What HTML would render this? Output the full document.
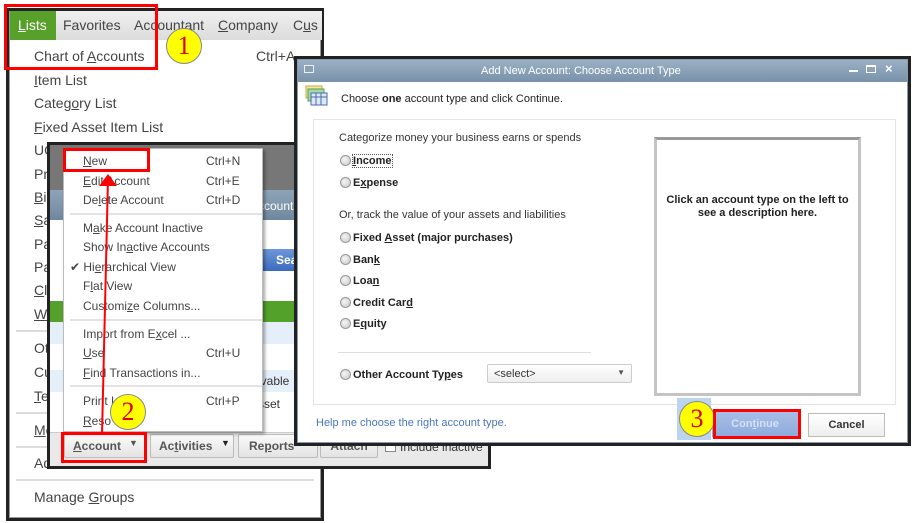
<!DOCTYPE html>
<html><head><meta charset="utf-8"><style>
*{margin:0;padding:0;box-sizing:border-box}
body{width:912px;height:523px;background:#fff;position:relative;overflow:hidden;font-family:"Liberation Sans",sans-serif;color:#333}
.a{position:absolute}
.mi{position:absolute;left:34px;font-size:14px;color:#444;white-space:nowrap}
.sep{position:absolute;left:16px;width:298px;height:2px;background:#ddd}
.am{position:absolute;left:19px;font-size:12px;color:#444;white-space:nowrap}
.sc{position:absolute;left:142px;font-size:12px;color:#444}
.asep{position:absolute;left:6px;width:192px;height:2px;background:#e3e3e3}
.rad{position:absolute;left:340px;width:11px;height:11px;border-radius:50%;background:radial-gradient(circle at 40% 40%,#f4f4f4,#c8c8c8);border:1px solid #999}
.rl{position:absolute;left:353px;font-size:11px;font-weight:bold;color:#222;white-space:nowrap}
.circ{position:absolute;width:36px;height:36px;border-radius:50%;background:#ffff00;border:1px solid #888;color:#d00;font-family:"Liberation Serif",serif;font-size:26px;text-align:center;line-height:34px}
.rb{position:absolute;border:3px solid #f00}
.btn{position:absolute;height:24px;border:1px solid #bbb;border-radius:2px;background:linear-gradient(#fafafa,#e4e4e4);font-size:12px;font-weight:bold;color:#555;padding:4px 0 0 0;text-align:center}
u{text-decoration:underline}
</style></head><body>

<!-- Lists menu window -->
<div class="a" style="left:6px;top:8px;width:318px;height:513px;border:3px solid #222;background:#fff"></div>
<div class="a" style="left:9px;top:11px;width:312px;height:507px;border:1px solid #999;background:#fff"></div>
<div class="a" style="left:10px;top:11px;width:312px;height:29px;background:linear-gradient(#f0f0f0,#dcdcdc)"></div>
<div class="a" style="left:10px;top:11px;width:46px;height:29px;background:#57a02a"></div>
<div class="a" style="left:18px;top:17px;font-size:14px;color:#fff"><u>L</u>ists</div>
<div class="a" style="left:63px;top:17px;font-size:14px;color:#444">Favorites</div>
<div class="a" style="left:134px;top:17px;font-size:14px;color:#444">Accountant</div>
<div class="a" style="left:218px;top:17px;font-size:14px;color:#444"><u>C</u>ompany</div>
<div class="a" style="left:293px;top:17px;font-size:14px;color:#444">C<u>u</u>s</div>

<div class="mi" style="top:48px">Chart of <u>A</u>ccounts</div>
<div class="a" style="left:256px;top:48px;font-size:14px;color:#444">Ctrl+A</div>
<div class="mi" style="top:72px"><u>I</u>tem List</div>
<div class="mi" style="top:95px">Categ<u>o</u>ry List</div>
<div class="mi" style="top:119px"><u>F</u>ixed Asset Item List</div>
<div class="mi" style="top:142px">UOM</div>
<div class="mi" style="top:166px">Price</div>
<div class="mi" style="top:189px"><u>B</u>ill</div>
<div class="mi" style="top:212px"><u>S</u>ales</div>
<div class="mi" style="top:236px">Payroll</div>
<div class="mi" style="top:259px">Payment</div>
<div class="mi" style="top:282px"><u>C</u>lass</div>
<div class="mi" style="top:306px"><u>W</u>ork</div>
<div class="sep" style="top:330px"></div>
<div class="mi" style="top:340px">Other</div>
<div class="mi" style="top:364px">Cust</div>
<div class="mi" style="top:388px"><u>T</u>em</div>
<div class="sep" style="top:412px"></div>
<div class="mi" style="top:422px"><u>M</u>em</div>
<div class="sep" style="top:446px"></div>
<div class="mi" style="top:455px">Add</div>
<div class="sep" style="top:479px"></div>
<div class="mi" style="top:489px">Manage <u>G</u>roups</div>

<!-- Chart of accounts window -->
<div class="a" style="left:47px;top:142px;width:444px;height:327px;border:3px solid #222;background:#777"></div>
<div class="a" style="left:50px;top:190px;width:440px;height:30px;background:linear-gradient(#8ea4b8,#6f879e)"></div>
<div class="a" style="left:250px;top:199px;font-size:12px;color:#fff">Accounts</div>
<div class="a" style="left:50px;top:220px;width:440px;height:212px;background:#fff"></div>
<div class="a" style="left:262px;top:249px;width:40px;height:22px;background:linear-gradient(#6d97d8,#3a6bc0);color:#fff;font-weight:bold;font-size:12px;padding:4px 0 0 14px">Sea</div>
<div class="a" style="left:50px;top:301px;width:250px;height:21px;background:#53a12a"></div>
<div class="a" style="left:50px;top:322px;width:250px;height:22px;background:#e5effa"></div>
<div class="a" style="left:50px;top:370px;width:250px;height:22px;background:#e5effa"></div>
<div class="a" style="left:258px;top:374px;font-size:12px;color:#333">ivable</div>
<div class="a" style="left:258px;top:397px;font-size:12px;color:#333">sset</div>
<div class="a" style="left:50px;top:432px;width:438px;height:34px;background:#e9e9e9;border-top:1px solid #ccc"></div>
<div class="btn" style="left:64px;top:434px;width:82px;text-align:left;padding-left:8px"><u>A</u>ccount <span style="position:absolute;left:64px;top:3px;font-size:9px">▼</span></div>
<div class="btn" style="left:150px;top:434px;width:84px;text-align:left;padding-left:8px">Ac<u>t</u>ivities <span style="position:absolute;left:70px;top:3px;font-size:9px;color:#222">▼</span></div>
<div class="btn" style="left:238px;top:434px;width:80px;text-align:left;padding-left:10px">Re<u>p</u>orts</div>
<div class="btn" style="left:320px;top:434px;width:58px">Attach</div>
<div class="a" style="left:385px;top:441px;width:11px;height:11px;border:1px solid #888;background:#fff"></div>
<div class="a" style="left:400px;top:440px;font-size:12px;color:#333">Include inactive</div>

<!-- Account dropdown -->
<div class="a" style="left:63px;top:148px;width:200px;height:284px;background:#fff;border:1px solid #bbb;box-shadow:2px 2px 3px rgba(0,0,0,.35)">
<div class="am" style="top:5px"><u>N</u>ew</div><div class="sc" style="top:5px">Ctrl+N</div>
<div class="am" style="top:25px"><u>E</u>dit Account</div><div class="sc" style="top:25px">Ctrl+E</div>
<div class="am" style="top:44px">De<u>l</u>ete Account</div><div class="sc" style="top:44px">Ctrl+D</div>
<div class="asep" style="top:64px"></div>
<div class="am" style="top:72px">M<u>a</u>ke Account Inactive</div>
<div class="am" style="top:91px">Show In<u>a</u>ctive Accounts</div>
<div class="am" style="top:111px;left:6px">✔ Hi<u>e</u>rarchical View</div>
<div class="am" style="top:130px">F<u>l</u>at View</div>
<div class="am" style="top:150px">Customi<u>z</u>e Columns...</div>
<div class="asep" style="top:170px"></div>
<div class="am" style="top:178px">Import from E<u>x</u>cel ...</div>
<div class="am" style="top:197px"><u>U</u>se</div><div class="sc" style="top:197px">Ctrl+U</div>
<div class="am" style="top:217px"><u>F</u>ind Transactions in...</div>
<div class="asep" style="top:236px"></div>
<div class="am" style="top:245px">Print L</div><div class="sc" style="top:245px">Ctrl+P</div>
<div class="am" style="top:265px"><u>R</u>eso</div>
</div>

<!-- Dialog -->
<div class="a" style="left:294px;top:56px;width:617px;height:390px;border:3px solid #222;background:#f7f7f7"></div>
<div class="a" style="left:297px;top:59px;width:611px;height:384px;border:1px solid #8a9bb0"></div>
<div class="a" style="left:298px;top:60px;width:609px;height:22px;background:linear-gradient(#9bb0c4,#7892aa)"></div>
<div class="a" style="left:304px;top:65px;width:10px;height:8px;border:1px solid #eee;background:#8aa0b6"></div>
<div class="a" style="left:481px;top:65px;font-size:11px;color:#fff">Add New Account: Choose Account Type</div>
<div class="a" style="left:849px;top:70px;width:9px;height:2px;background:#fff"></div>
<div class="a" style="left:866px;top:65px;width:10px;height:8px;border:1px solid #fff;border-top-width:2px"></div>
<div class="a" style="left:885px;top:61px;font-size:13px;color:#fff;font-weight:bold">×</div>
<div class="a" style="left:298px;top:82px;width:609px;height:360px;background:#fff"></div>
<svg class="a" style="left:305px;top:85px" width="24" height="22"><rect x="1" y="1" width="16" height="12" fill="#f3e9a0" stroke="#c8a840"/><rect x="3" y="4" width="16" height="12" fill="#a6d8a6" stroke="#5a9a5a"/><rect x="6" y="8" width="16" height="12" fill="#dde8f6" stroke="#4a6ea8"/><path d="M6 12h16M11 8v12M16 8v12" stroke="#4a6ea8"/></svg>
<div class="a" style="left:341px;top:93px;font-size:11px;color:#222">Choose <b>one</b> account type and click Continue.</div>
<div class="a" style="left:313px;top:119px;width:583px;height:286px;border:1px solid #e4e4e4;background:#fff"></div>
<div class="a" style="left:339px;top:132px;font-size:11px;color:#333">Categorize money your business earns or spends</div>
<div class="rad" style="top:155px"></div><div class="rl" style="top:155px;outline:1px dotted #555"><u>I</u>ncome</div>
<div class="rad" style="top:177px"></div><div class="rl" style="top:177px">E<u>x</u>pense</div>
<div class="a" style="left:339px;top:209px;font-size:11px;color:#333">Or, track the value of your assets and liabilities</div>
<div class="rad" style="top:232px"></div><div class="rl" style="top:232px">Fixed <u>A</u>sset (major purchases)</div>
<div class="rad" style="top:254px"></div><div class="rl" style="top:254px">Ban<u>k</u></div>
<div class="rad" style="top:275px"></div><div class="rl" style="top:275px">Loa<u>n</u></div>
<div class="rad" style="top:297px"></div><div class="rl" style="top:297px">Credit Car<u>d</u></div>
<div class="rad" style="top:318px"></div><div class="rl" style="top:318px">E<u>q</u>uity</div>
<div class="a" style="left:338px;top:352px;width:253px;height:1px;background:#ddd"></div>
<div class="rad" style="top:369px"></div><div class="rl" style="top:369px">Other Account Ty<u>p</u>es</div>
<div class="a" style="left:487px;top:364px;width:145px;height:19px;border:1px solid #ccc;border-radius:2px;background:linear-gradient(#fff,#eee);font-size:11px;color:#333;padding:3px 0 0 6px">&lt;select&gt;<span style="position:absolute;right:6px;top:3px;font-size:8px;color:#555">▼</span></div>
<div class="a" style="left:654px;top:137px;width:207px;height:259px;border:3px solid #c4c4c4;border-top-color:#999;background:#fff"></div>
<div class="a" style="left:657px;top:194px;width:201px;text-align:center;font-size:11px;font-weight:bold;color:#222;line-height:13px">Click an account type on the left to<br>see a description here.</div>
<div class="a" style="left:316px;top:417px;font-size:11px;color:#4a76c0">Help me choose the right account type.</div>
<div class="a" style="left:677px;top:398px;width:34px;height:42px;background:#bcd4ee"></div>
<div class="a" style="left:712px;top:411px;width:86px;height:26px;background:linear-gradient(#a8bfe6,#8eaade);font-size:11px;font-weight:bold;color:#d4e0f4;text-align:center;padding-top:7px">Con<u>t</u>inue</div>
<div class="a" style="left:808px;top:413px;width:77px;height:24px;border:1px solid #bbb;background:linear-gradient(#fff,#eee);font-size:11px;font-weight:bold;color:#333;text-align:center;padding-top:5px">Cancel</div>

<!-- Annotations -->
<div class="rb" style="left:4px;top:4px;width:154px;height:66px"></div>
<div class="circ" style="left:166px;top:28px">1</div>
<div class="rb" style="left:63px;top:148px;width:87px;height:24px"></div>
<svg class="a" style="left:95px;top:170px" width="30" height="275"><path d="M7 265 L13 8" stroke="#f00" stroke-width="2" fill="none"/><path d="M13 4 L4 16 L22 16 Z" fill="#f00"/></svg>
<div class="circ" style="left:110px;top:394px">2</div>
<div class="rb" style="left:61px;top:432px;width:86px;height:31px"></div>
<div class="circ" style="left:679px;top:401px">3</div>
<div class="rb" style="left:713px;top:409px;width:88px;height:30px"></div>
</body></html>
